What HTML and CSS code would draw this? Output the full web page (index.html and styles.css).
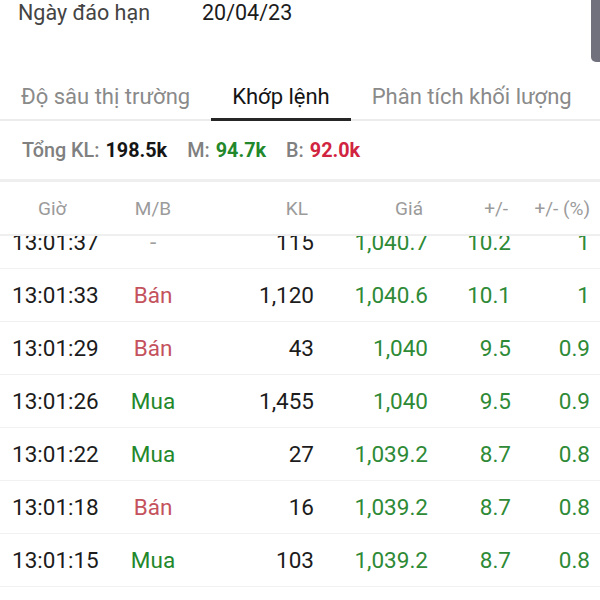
FILE: index.html
```html
<!DOCTYPE html>
<html lang="vi">
<head>
    <meta charset="UTF-8">
    <meta name="viewport" content="width=device-width, initial-scale=1.0">
    <title>Khớp lệnh</title>
    <link rel="stylesheet" href="styles.css">
</head>
<body>
    <div class="screen">
        <!-- Thông tin hợp đồng -->
        <div class="info">
            <span class="info-label">Ngày đáo hạn</span>
            <span class="info-value">20/04/23</span>
        </div>

        <!-- Tabs -->
        <div class="tabs">
            <div class="tab">Độ sâu thị trường</div>
            <div class="tab active">Khớp lệnh</div>
            <div class="tab">Phân tích khối lượng</div>
        </div>

        <!-- Tổng khối lượng -->
        <div class="summary">
            <span class="sum-label">Tổng KL:</span> <b class="sum-total">198.5k</b>
            <span class="sum-label sum-gap">M:</span> <b class="up">94.7k</b>
            <span class="sum-label sum-gap">B:</span> <b class="down">92.0k</b>
        </div>

        <!-- Bảng khớp lệnh -->
        <div class="grid head">
            <div class="c-time">Giờ</div>
            <div class="c-side">M/B</div>
            <div class="c-vol">KL</div>
            <div class="c-price">Giá</div>
            <div class="c-chg">+/-</div>
            <div class="c-pct">+/- (%)</div>
        </div>

        <div class="rows">
            <div class="rows-inner">
                <div class="grid row">
                    <div class="c-time">13:01:37</div>
                    <div class="c-side none">-</div>
                    <div class="c-vol">115</div>
                    <div class="c-price">1,040.7</div>
                    <div class="c-chg">10.2</div>
                    <div class="c-pct">1</div>
                </div>
                <div class="grid row">
                    <div class="c-time">13:01:33</div>
                    <div class="c-side sell">Bán</div>
                    <div class="c-vol">1,120</div>
                    <div class="c-price">1,040.6</div>
                    <div class="c-chg">10.1</div>
                    <div class="c-pct">1</div>
                </div>
                <div class="grid row">
                    <div class="c-time">13:01:29</div>
                    <div class="c-side sell">Bán</div>
                    <div class="c-vol">43</div>
                    <div class="c-price">1,040</div>
                    <div class="c-chg">9.5</div>
                    <div class="c-pct">0.9</div>
                </div>
                <div class="grid row">
                    <div class="c-time">13:01:26</div>
                    <div class="c-side buy">Mua</div>
                    <div class="c-vol">1,455</div>
                    <div class="c-price">1,040</div>
                    <div class="c-chg">9.5</div>
                    <div class="c-pct">0.9</div>
                </div>
                <div class="grid row">
                    <div class="c-time">13:01:22</div>
                    <div class="c-side buy">Mua</div>
                    <div class="c-vol">27</div>
                    <div class="c-price">1,039.2</div>
                    <div class="c-chg">8.7</div>
                    <div class="c-pct">0.8</div>
                </div>
                <div class="grid row">
                    <div class="c-time">13:01:18</div>
                    <div class="c-side sell">Bán</div>
                    <div class="c-vol">16</div>
                    <div class="c-price">1,039.2</div>
                    <div class="c-chg">8.7</div>
                    <div class="c-pct">0.8</div>
                </div>
                <div class="grid row">
                    <div class="c-time">13:01:15</div>
                    <div class="c-side buy">Mua</div>
                    <div class="c-vol">103</div>
                    <div class="c-price">1,039.2</div>
                    <div class="c-chg">8.7</div>
                    <div class="c-pct">0.8</div>
                </div>
                <div class="grid row">
                    <div class="c-time">13:01:11</div>
                    <div class="c-side buy">Mua</div>
                    <div class="c-vol">58</div>
                    <div class="c-price">1,039.2</div>
                    <div class="c-chg">8.7</div>
                    <div class="c-pct">0.8</div>
                </div>
            </div>
        </div>

        <!-- Thanh cuộn -->
        <div class="scrollbar"></div>
    </div>
</body>
</html>
```

FILE: styles.css
```css
/* Chung */
* {
    box-sizing: border-box;
}

body {
    margin: 0;
    font-family: Roboto, "Noto Sans", sans-serif;
    background: #fff;
    color: #1c1c1c;
}

.screen {
    position: relative;
    width: 600px;
    height: 600px;
    overflow: hidden;
}

/* Ngày đáo hạn */
.info {
    display: flex;
    height: 74px;
    padding-left: 18px;
    font-size: 21.5px;
    line-height: 26px;
}

.info-label {
    width: 184px;
    color: #444;
}

.info-value {
    color: #1c1c1c;
}

/* Tabs */
.tabs {
    display: flex;
    gap: 42px;
    padding-left: 21px;
    border-bottom: 2px solid #ececec;
    font-size: 22px;
}

.tab {
    padding: 10px 0 9px;
    color: #8a8a8a;
    border-bottom: 3px solid transparent;
    margin-bottom: -2px;
}

.tab.active {
    color: #151515;
    border-bottom-color: #262626;
    padding-left: 21px;
    padding-right: 21px;
    margin: 0 -21px -2px;
}

/* Tổng khối lượng */
.summary {
    height: 61px;
    padding-left: 22px;
    display: flex;
    align-items: center;
    gap: 6px;
    font-size: 19.8px;
    border-bottom: 3px solid #efefef;
}

.sum-label {
    color: #808080;
    font-weight: 500;
}

.sum-gap {
    margin-left: 14px;
}

.summary b {
    font-weight: 700;
}

.sum-total {
    color: #151515;
}

.up {
    color: #23882b;
}

.down {
    color: #d12440;
}

/* Bảng */
.grid {
    display: grid;
    grid-template-columns: 100px 82px 120px 114px 83px 79px;
    padding: 0 10px 0 12px;
    align-items: center;
}

.head {
    position: relative;
    z-index: 1;
    height: 54px;
    background: #fff;
    border-bottom: 2px solid #efefef;
    color: #9b9b9b;
    font-size: 19px;
}

.head .c-time {
    padding-left: 26px;
    text-align: left;
}

.head .c-vol { padding-right: 6px; }
.head .c-price { padding-right: 5px; }
.head .c-chg { padding-right: 3px; }

.c-side {
    text-align: center;
}

.c-vol, .c-price, .c-chg, .c-pct {
    text-align: right;
}

.rows {
    height: 400px;
    overflow: hidden;
}

.rows-inner {
    margin-top: -20px;
}

.row {
    height: 53px;
    border-bottom: 1.5px solid #f1f1f1;
    font-size: 22.5px;
}

.row .c-price, .row .c-chg, .row .c-pct {
    color: #2e8a36;
}

.buy {
    color: #23882b;
}

.sell {
    color: #c4525d;
}

.none {
    color: #a0a0a0;
}

/* Thanh cuộn */
.scrollbar {
    position: absolute;
    top: -6px;
    right: 0;
    width: 9px;
    height: 68px;
    background: #71717d;
    border-radius: 5px 0 0 5px;
}
```
